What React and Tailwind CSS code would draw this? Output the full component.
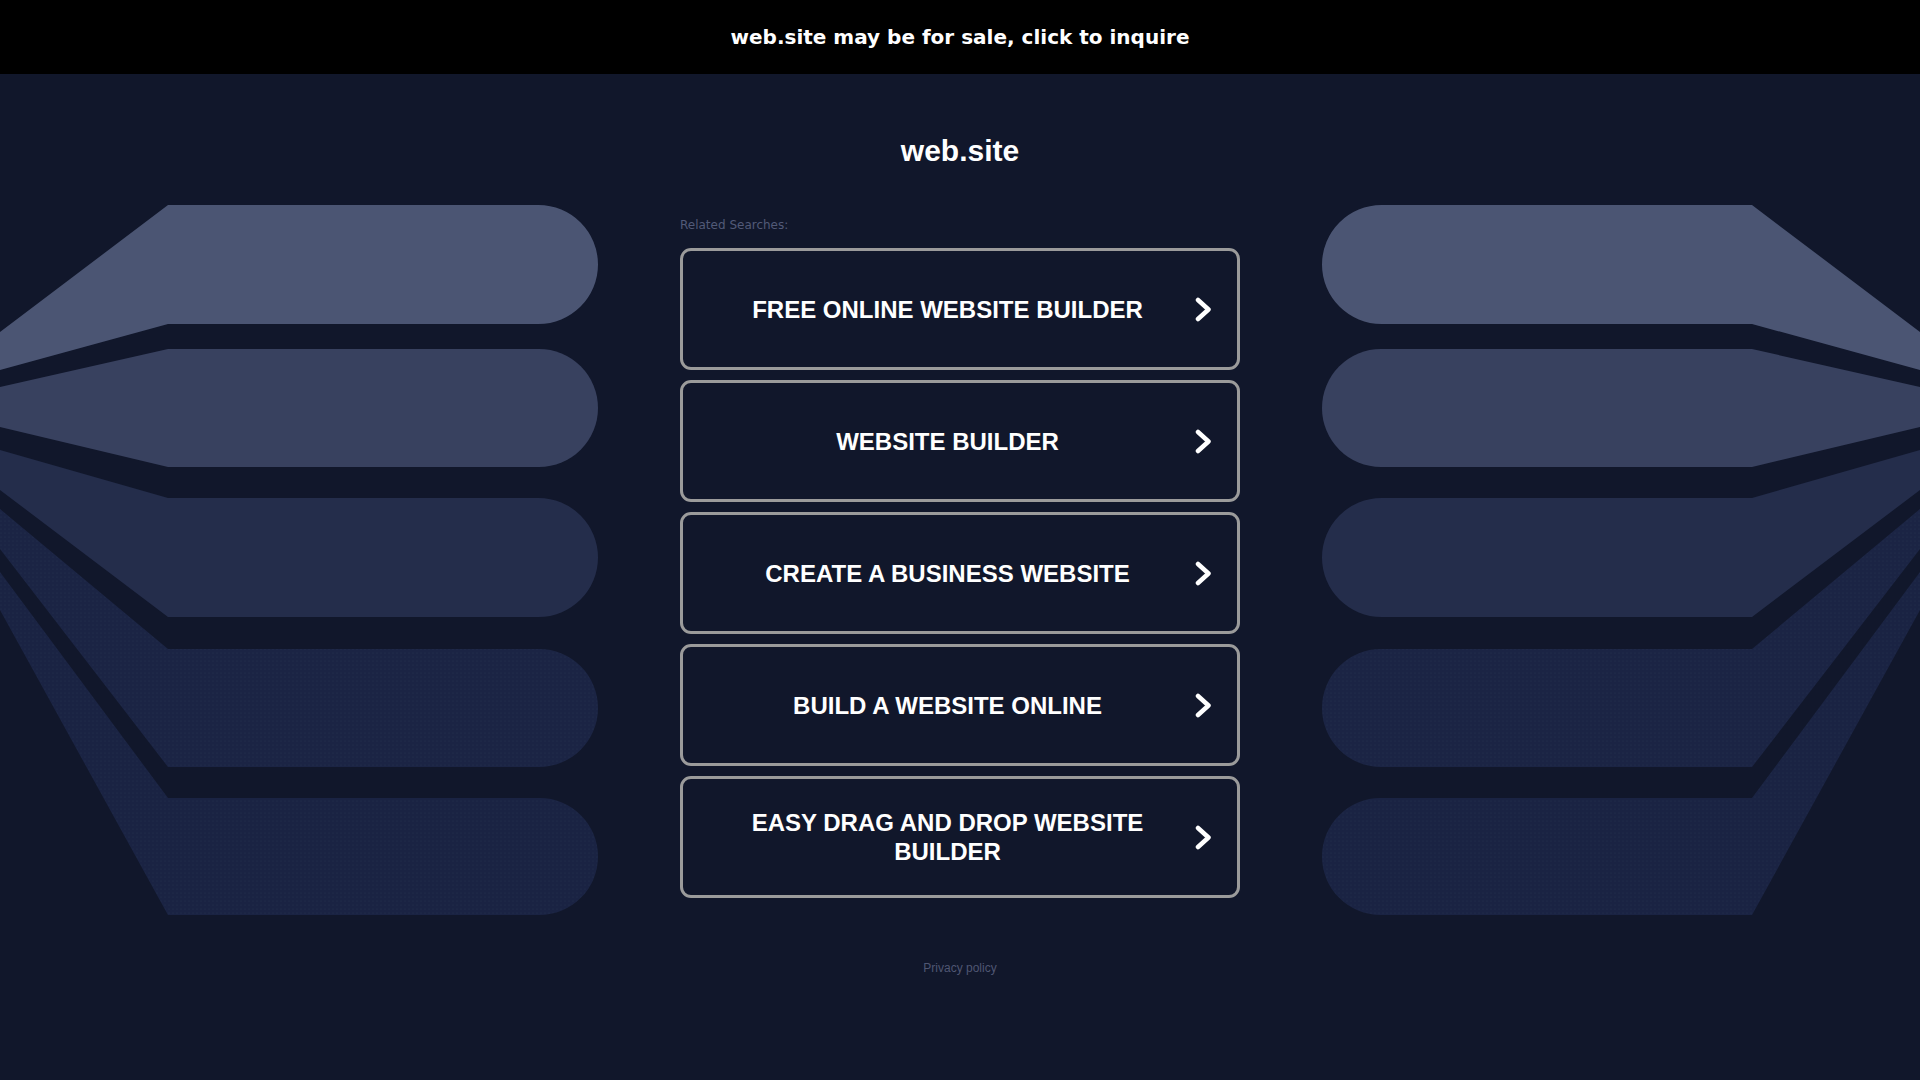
import React from 'react';

const SEARCHES = [
  'FREE ONLINE WEBSITE BUILDER',
  'WEBSITE BUILDER',
  'CREATE A BUSINESS WEBSITE',
  'BUILD A WEBSITE ONLINE',
  'EASY DRAG AND DROP WEBSITE BUILDER',
];

// top, bottom of the pill; y where the taper meets the page edge
const BANDS = [
  { top: 205, bottom: 324, edgeTop: 332, edgeBottom: 370, fill: '#4b5573' },
  { top: 349, bottom: 467, edgeTop: 387, edgeBottom: 427, fill: '#38415f' },
  { top: 498, bottom: 617, edgeTop: 450, edgeBottom: 490, fill: '#242d4b' },
  { top: 649, bottom: 767, edgeTop: 509, edgeBottom: 549, fill: 'url(#dots4)' },
  { top: 798, bottom: 915, edgeTop: 572, edgeBottom: 610, fill: 'url(#dots5)' },
];

function bandPath(b) {
  const r = (b.bottom - b.top) / 2;
  const x = 598 - r;
  return `M0 ${b.edgeTop} L168 ${b.top} L${x} ${b.top} A${r} ${r} 0 0 1 ${x} ${b.bottom} L168 ${b.bottom} L0 ${b.edgeBottom} Z`;
}

function Backdrop() {
  return (
    <svg className="absolute inset-0 w-full h-full pointer-events-none" viewBox="0 0 1920 1080" preserveAspectRatio="none">
      <defs>
        <pattern id="dots4" width="4" height="4" patternUnits="userSpaceOnUse">
          <rect width="4" height="4" fill="#1b2444" />
          <circle cx="1" cy="1" r="0.6" fill="#26304f" />
        </pattern>
        <pattern id="dots5" width="4" height="4" patternUnits="userSpaceOnUse">
          <rect width="4" height="4" fill="#1a2343" />
          <circle cx="1" cy="1" r="0.6" fill="#252f4e" />
        </pattern>
      </defs>
      <g>
        {BANDS.map((b, i) => <path key={i} d={bandPath(b)} fill={b.fill} />)}
      </g>
      <g transform="translate(1920,0) scale(-1,1)">
        {BANDS.map((b, i) => <path key={i} d={bandPath(b)} fill={b.fill} />)}
      </g>
    </svg>
  );
}

function Chevron() {
  return (
    <svg width="17" height="25" viewBox="0 0 17 25" className="shrink-0">
      <polyline points="3,3 13.5,12.5 3,22" fill="none" stroke="#ffffff" strokeWidth="4.5" strokeLinecap="round" strokeLinejoin="round" />
    </svg>
  );
}

export default function App() {
  return (
    <div className="min-h-screen bg-[#11172b] flex flex-col">
      <a href="#" className="h-[74px] bg-black flex items-center justify-center text-white text-[20px] font-bold" style={{ fontFamily: '"DejaVu Sans", sans-serif' }}>
        web.site may be for sale, click to inquire
      </a>

      <div className="relative flex-1">
        <div className="absolute left-0 right-0 top-[-74px] h-[1080px]">
          <Backdrop />
        </div>

        <div className="relative flex flex-col items-center" style={{ fontFamily: '"Liberation Sans", Arial, sans-serif' }}>
          <h1 className="mt-[59px] text-white text-[30px] leading-[36px] font-bold">web.site</h1>

          <div className="w-[560px] mt-[48px]">
            <p className="text-[12px] leading-[16px] text-[#525a78]" style={{ fontFamily: '"DejaVu Sans", sans-serif' }}>
              Related Searches:
            </p>
            <div className="mt-[15px] flex flex-col gap-[10px]">
              {SEARCHES.map(s => (
                <a key={s} href="#" className="h-[122px] border-[3px] border-[#9b9b9b] rounded-[11px] flex items-center pl-[26px] pr-[25px] gap-[9px]">
                  <span className="flex-1 text-center text-white text-[24px] leading-[29px] font-bold">{s}</span>
                  <Chevron />
                </a>
              ))}
            </div>
          </div>

          <a href="#" className="mt-[62px] text-[12px] leading-[16px] text-[#4f5672]">Privacy policy</a>
        </div>
      </div>
    </div>
  );
}
